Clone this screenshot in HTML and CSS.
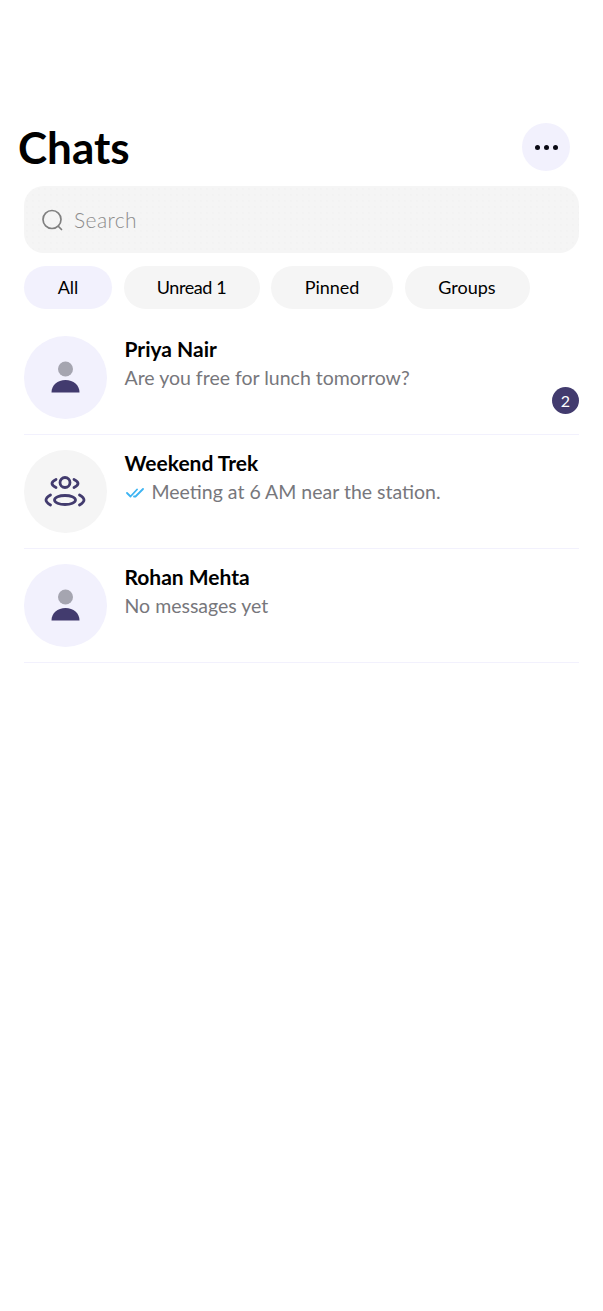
FILE: index.html
```html
<!DOCTYPE html>
<html lang="en">
<head>
    <meta charset="UTF-8">
    <meta name="viewport" content="width=device-width, initial-scale=1.0">
    <title>Chats</title>
    <link rel="stylesheet" href="styles.css">
</head>
<body>
    <div class="header">
        <h1 class="title">Chats</h1>
        <div class="menu-btn">
            <span class="dot"></span><span class="dot"></span><span class="dot"></span>
        </div>
    </div>

    <div class="search">
        <svg class="search-icon" width="24" height="24" viewBox="0 0 24 24" fill="none" stroke="#808080" stroke-width="1.7" stroke-linecap="round">
            <circle cx="11" cy="11.500" r="9"/>
            <path d="M17.500 18.500l3 3"/>
        </svg>
        <span class="search-text">Search</span>
    </div>

    <div class="chips">
        <div class="chip active chip-all">All</div>
        <div class="chip chip-unread">Unread 1</div>
        <div class="chip chip-pinned">Pinned</div>
        <div class="chip chip-groups">Groups</div>
    </div>

    <div class="chat-list">
        <div class="chat">
            <div class="avatar">
                <svg width="30" height="32" viewBox="-0.500 0 30 32">
                    <circle cx="15" cy="8" r="7.500" fill="#a5a5b0"/>
                    <path d="M1 31.500C1 24 7 19 15 19s14 5 14 12.500z" fill="#423b6e"/>
                </svg>
            </div>
            <div class="chat-body">
                <div class="name">Priya Nair</div>
                <div class="msg">Are you free for lunch tomorrow?</div>
            </div>
            <div class="badge">2</div>
        </div>

        <div class="chat">
            <div class="avatar grey">
                <svg width="42" height="32" viewBox="0 0 42 32" fill="none" stroke="#423b6e" stroke-width="2.800" stroke-linecap="round" stroke-linejoin="round">
                    <circle cx="21" cy="7.500" r="5"/>
                    <ellipse cx="21" cy="25" rx="10.500" ry="4.500"/>
                    <path d="M12 4.500C10 5.500 8 7 8 8.500S10 11.500 12 12.500"/>
                    <path d="M30 4.500C32 5.500 34 7 34 8.500S32 11.500 30 12.500"/>
                    <path d="M6.500 20C4 21.500 2 23.500 2 25s2 3.500 4.500 5"/>
                    <path d="M35.500 20C38 21.500 40 23.500 40 25s-2 3.500-4.500 5"/>
                </svg>
            </div>
            <div class="chat-body">
                <div class="name">Weekend Trek</div>
                <div class="msg">
                    <svg class="ticks" width="18" height="11" viewBox="0 0 18 11" fill="none" stroke="#3db4f2" stroke-width="1.800" stroke-linecap="round" stroke-linejoin="round">
                        <path d="M1 6l3.500 3.500L11 2.500"/>
                        <path d="M8 9.500h1.500L17 2"/>
                    </svg>
                    Meeting at 6 AM near the station.
                </div>
            </div>
        </div>

        <div class="chat">
            <div class="avatar">
                <svg width="30" height="32" viewBox="-0.500 0 30 32">
                    <circle cx="15" cy="8" r="7.500" fill="#a5a5b0"/>
                    <path d="M1 31.500C1 24 7 19 15 19s14 5 14 12.500z" fill="#423b6e"/>
                </svg>
            </div>
            <div class="chat-body">
                <div class="name">Rohan Mehta</div>
                <div class="msg">No messages yet</div>
            </div>
        </div>
    </div>
</body>
</html>
```

FILE: styles.css
```css
body {
    margin: 0;
    padding: 123px 24px 0;
    background: #fff;
    font-family: Lato, "Noto Sans", sans-serif;
    color: #000;
}
.header {
    display: flex;
    justify-content: space-between;
    align-items: center;
    height: 48px;
    margin-left: -6px;
    padding-right: 9px;
}
.title {
    margin: 0;
    font-size: 44px;
    font-weight: 700;
    line-height: 48px;
}
.menu-btn {
    display: flex;
    justify-content: center;
    align-items: center;
    gap: 4px;
    width: 48px;
    height: 48px;
    border-radius: 50%;
    background: #f2f1fd;
}
.dot {
    width: 5px;
    height: 5px;
    border-radius: 50%;
    background: #0a0a14;
}
.search {
    display: flex;
    align-items: center;
    gap: 9px;
    height: 67px;
    margin-top: 15px;
    padding-left: 17px;
    border-radius: 20px;
    background-color: #f5f5f5;
    background-image: radial-gradient(#eeeeee 0.5px, transparent 0.8px);
    background-size: 6px 6px;
}
.search-text {
    font-size: 21px;
    font-weight: 300;
    color: #8c8c8c;
    letter-spacing: 0.4px;
}
.chips {
    display: flex;
    gap: 11.500px;
    margin-top: 13px;
}
.chip {
    display: flex;
    justify-content: center;
    align-items: center;
    height: 43px;
    padding-bottom: 2px;
    box-sizing: border-box;
    border-radius: 22px;
    background: #f5f5f5;
    font-size: 18px;
}
.chip.active {
    background: #f2f1fd;
}
.chip-all { width: 88px; }
.chip-unread { width: 136px; letter-spacing: -0.4px; }
.chip-pinned { width: 122px; }
.chip-groups { width: 125px; }
.chat-list {
    margin-top: 27px;
}
.chat {
    position: relative;
    display: flex;
    gap: 18px;
    height: 82px;
    padding-bottom: 16px;
    margin-bottom: 15px;
    border-bottom: 1px solid #f2f1fd;
}
.avatar {
    display: flex;
    justify-content: center;
    align-items: center;
    flex: none;
    width: 82.500px;
    height: 82.500px;
    border-radius: 50%;
    background: #f2f1fd;
}
.avatar.grey {
    background: #f5f5f5;
}
.name {
    font-size: 21px;
    font-weight: 700;
    line-height: 26px;
}
.msg {
    display: flex;
    align-items: center;
    gap: 8px;
    margin-top: 3px;
    font-size: 19.500px;
    line-height: 26px;
    color: #77777c;
}
.ticks {
    flex: none;
    margin-left: 1px;
}
.badge {
    position: absolute;
    right: 0;
    top: 51px;
    width: 27px;
    height: 27px;
    border-radius: 50%;
    background: #423b6e;
    color: #fff;
    font-size: 16px;
    line-height: 27px;
    text-align: center;
}
```
